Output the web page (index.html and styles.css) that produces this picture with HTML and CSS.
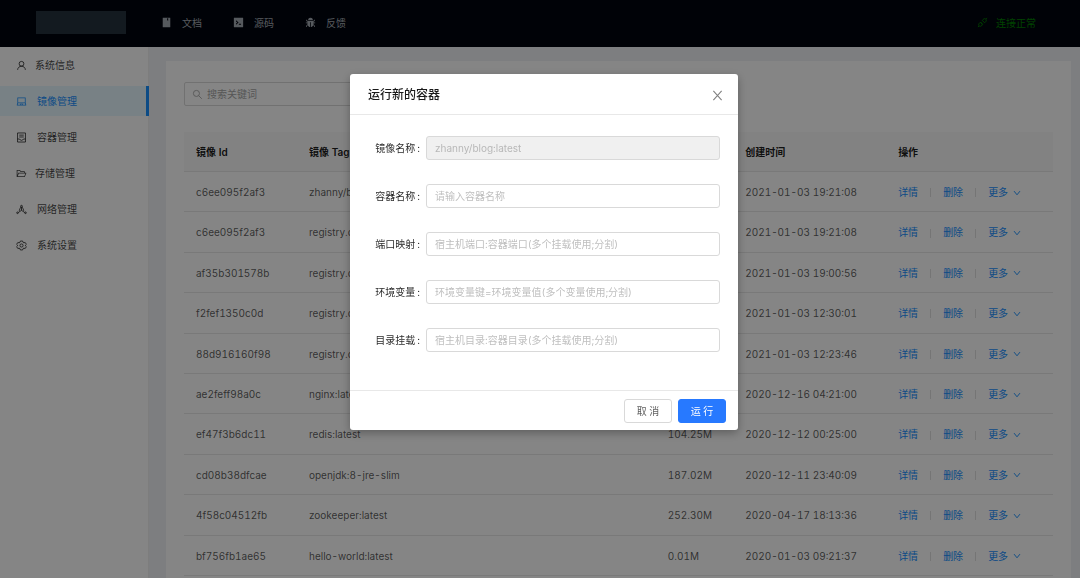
FILE: index.html
```html
<!DOCTYPE html>
<html lang="zh-CN">
<head>
<meta charset="utf-8">
<meta name="viewport" content="width=device-width, initial-scale=1">
<title>镜像管理</title>
<link rel="stylesheet" href="styles.css">
</head>
<body>
<svg class="sprite" aria-hidden="true">
  <symbol id="i-book" viewBox="0 0 1024 1024"><path d="M832 64H192c-17.700 0-32 14.300-32 32v832c0 17.700 14.300 32 32 32h640c17.700 0 32-14.300 32-32V96c0-17.700-14.300-32-32-32zM668 345.900L621.500 312 572 347.400V124h96v221.900z"/></symbol>
  <symbol id="i-code" viewBox="0 0 1024 1024"><path fill-rule="evenodd" d="M912 80H112c-17.700 0-32 14.300-32 32v800c0 17.700 14.300 32 32 32h800c17.700 0 32-14.300 32-32V112c0-17.700-14.300-32-32-32zM281 313l240 199-240 199v-104l117-95-117-95zM544 635h204v76H544z"/></symbol>
  <symbol id="i-bug" viewBox="0 0 1024 1024"><path d="M304 280h416c4 0 8-4 8-8 0-40-9-77-24-108-40-62-109-100-192-100S360 102 320 164c-15 31-24 68-24 108 0 4 4 8 8 8zM940 512H792V412c77 0 140-63 140-140 0-4-4-8-8-8h-56c-4 0-8 4-8 8 0 37-30 68-68 68H232c-37 0-68-30-68-68 0-4-4-8-8-8h-56c-4 0-8 4-8 8 0 77 63 140 140 140v100H84c-4 0-8 4-8 8v56c0 4 4 8 8 8h148v96c0 7 0 13 1 19-83 38-141 122-141 220 0 4 4 8 8 8h56c4 0 8-4 8-8 0-65 39-121 95-146 43 105 130 157 217 169V484h72v458c87-12 174-64 217-169 56 25 95 81 95 146 0 4 4 8 8 8h56c4 0 8-4 8-8 0-98-58-182-141-220 1-6 1-12 1-19v-96h148c4 0 8-4 8-8v-56c0-4-4-8-8-8z"/></symbol>
  <symbol id="i-api" viewBox="0 0 1024 1024"><path class="line" d="M480 322l92-92c70-90 190-100 250-30s56 160-14 240l-94 94zM314 488l-92 92c-80 80-90 180-30 240s150 60 240-14l94-94zM850 172l90-90M84 940l100-100M414 500l-70 70M520 610l-70 70"/></symbol>
  <symbol id="i-user" viewBox="0 0 1024 1024"><path class="line" d="M512 130a222 222 0 1 1 0 444a222 222 0 1 1 0-444zM150 920c8-200 170-346 362-346s354 146 362 346"/></symbol>
  <symbol id="i-laptop" viewBox="0 0 1024 1024"><path d="M956.900 845.100L896.400 632V168c0-17.700-14.300-32-32-32h-704c-17.700 0-32 14.300-32 32v464L67.900 845.100C60.400 866 75.800 888 98 888h828.800c22.200 0 37.600-22 30.100-42.900zM200.400 208h624v395h-624V208zm228.300 608l8.100-37h150.300l8.100 37H428.700zm224 0l-19.100-86.700c-.8-3.700-4.100-6.300-7.800-6.300H398.200c-3.800 0-7 2.600-7.800 6.300L371.300 816H151l42.300-149h638.200l42.300 149H652.700z"/></symbol>
  <symbol id="i-container" viewBox="0 0 1024 1024"><path class="line" d="M144 90h736v844H144zM300 292h424M300 464h424M144 654h184c30 74 102 124 184 124s154-50 184-124h184"/></symbol>
  <symbol id="i-folder" viewBox="0 0 1024 1024"><path d="M928 444H820V330.400c0-17.700-14.300-32-32-32H473L355.700 186.200a8.150 8.150 0 0 0-5.500-2.200H96c-17.700 0-32 14.300-32 32v592c0 17.700 14.300 32 32 32h698c13 0 24.800-7.900 29.700-20l134-332c1.500-3.800 2.300-7.900 2.300-12 0-17.700-14.300-32-32-32zM136 256h188.500l119.600 114.400H748V444H238c-13 0-24.800 7.900-29.700 20L136 643.200V256zm635.300 512H159l103.300-256h612.400L771.300 768z"/></symbol>
  <symbol id="i-network" viewBox="0 0 1024 1024"><path class="line" d="M512 124a84 84 0 1 1 0 168a84 84 0 1 1 0-168zM140 742a76 76 0 1 1 0 152a76 76 0 1 1 0-152zM884 742a76 76 0 1 1 0 152a76 76 0 1 1 0-152zM512 292v300M512 592L212 790M512 592l300 198M446 290C380 400 330 500 300 640M578 290c66 110 116 210 146 350"/></symbol>
  <symbol id="i-setting" viewBox="0 0 1024 1024"><path class="line" d="M405 95h214l32 120 84 48 120-34 107 178-88 86v38l88 86-107 178-120-34-84 48-32 120H405l-32-120-84-48-120 34L62 617l88-86v-38l-88-86 107-178 120 34 84-48zM512 366a146 146 0 1 1 0 292a146 146 0 1 1 0-292z"/></symbol>
  <symbol id="i-search" viewBox="0 0 1024 1024"><path class="line" d="M412 130a282 282 0 1 1 0 564a282 282 0 1 1 0-564zM610 610l300 300"/></symbol>
  <symbol id="i-close" viewBox="0 0 1024 1024"><path class="line" d="M186 146l652 732M838 146L186 878"/></symbol>
  <symbol id="i-down" viewBox="0 0 1024 1024"><path class="line thick" d="M132 270l380 470 380-470"/></symbol>
</svg>

<div class="app">
  <header class="topbar">
    <div class="logo"></div>
    <nav class="topnav">
      <a href="#"><svg class="icon"><use href="#i-book"/></svg>文档</a>
      <a href="#"><svg class="icon"><use href="#i-code"/></svg>源码</a>
      <a href="#"><svg class="icon"><use href="#i-bug"/></svg>反馈</a>
    </nav>
    <div class="status"><svg class="icon"><use href="#i-api"/></svg>连接正常</div>
  </header>

  <div class="workspace">
    <nav class="sidebar">
      <a href="#"><svg class="icon"><use href="#i-user"/></svg>系统信息</a>
      <a href="#" class="wide active"><svg class="icon"><use href="#i-laptop"/></svg>镜像管理</a>
      <a href="#" class="wide"><svg class="icon"><use href="#i-container"/></svg>容器管理</a>
      <a href="#"><svg class="icon"><use href="#i-folder"/></svg>存储管理</a>
      <a href="#" class="wide"><svg class="icon"><use href="#i-network"/></svg>网络管理</a>
      <a href="#" class="wide"><svg class="icon"><use href="#i-setting"/></svg>系统设置</a>
    </nav>

    <main class="content">
      <section class="card">
        <label class="search">
          <svg class="icon"><use href="#i-search"/></svg>
          <input type="text" placeholder="搜索关键词" aria-label="搜索关键词">
        </label>
        <table class="images">
          <colgroup><col class="c-id"><col class="c-tag"><col class="c-size"><col class="c-time"><col class="c-ops"></colgroup>
          <thead><tr><th>镜像 Id</th><th>镜像 Tag</th><th>大小</th><th>创建时间</th><th>操作</th></tr></thead>
          <tbody id="rows"></tbody>
        </table>
      </section>
    </main>
  </div>
</div>

<div class="mask">
  <form class="modal" role="dialog" aria-modal="true" aria-labelledby="dialog-title">
    <header class="modal-head">
      <h2 id="dialog-title">运行新的容器</h2>
      <button type="button" class="close" aria-label="关闭"><svg class="icon"><use href="#i-close"/></svg></button>
    </header>
    <div class="modal-body">
      <label for="f-image">镜像名称</label><input id="f-image" type="text" value="zhanny/blog:latest" disabled>
      <label for="f-name">容器名称</label><input id="f-name" type="text" placeholder="请输入容器名称">
      <label for="f-port">端口映射</label><input id="f-port" type="text" placeholder="宿主机端口:容器端口(多个挂载使用;分割)">
      <label for="f-env">环境变量</label><input id="f-env" type="text" placeholder="环境变量键=环境变量值(多个变量使用;分割)">
      <label for="f-dir">目录挂载</label><input id="f-dir" type="text" placeholder="宿主机目录:容器目录(多个挂载使用;分割)">
    </div>
    <footer class="modal-foot">
      <button type="button" class="btn">取 消</button>
      <button type="button" class="btn primary">运 行</button>
    </footer>
  </form>
</div>
<script src="app.js"></script>
</body>
</html>
```
FILE: styles.css
```css
* { box-sizing: border-box; }

body {
  margin: 0;
  font: 10px/16px Inter, "Noto Sans CJK SC", sans-serif;
  font-variant-numeric: tabular-nums;
  color: rgba(0, 0, 0, .65);
  overflow: hidden;
}

a { color: #1890ff; text-decoration: none; }
input, button { font: inherit; }
.sprite { display: none; }
.icon { width: 11px; height: 11px; flex: none; fill: currentColor; }
.line { fill: none; stroke: currentColor; stroke-width: 84; }
.thick { stroke-width: 120; }

.app { display: flex; flex-direction: column; height: 100vh; }

.topbar {
  display: flex;
  align-items: center;
  flex: none;
  height: 47px;
  padding: 0 44px 2px 36px;
  background: #00040f;
}
.logo { width: 90px; height: 23px; background: #25333f; }
.topnav { display: flex; gap: 31px; margin-left: 35px; }
.topnav a, .status { display: flex; align-items: center; gap: 10px; }
.topnav a { color: #a6adb4; }
.status { margin-left: auto; gap: 8px; color: #008000; }

.workspace { display: flex; flex: 1; min-height: 0; }

.sidebar {
  display: flex;
  flex-direction: column;
  gap: 6px;
  flex: none;
  width: 149px;
  padding-top: 3px;
  background: #fff;
  border-right: 1px solid #f0f0f0;
}
.sidebar a {
  display: flex;
  align-items: center;
  gap: 8px;
  height: 30px;
  padding-left: 16px;
  color: rgba(0, 0, 0, .75);
}
.sidebar .wide { gap: 10px; }
.sidebar .active {
  margin-right: -1px;
  color: #1890ff;
  background: #e6f7ff;
  border-right: 3px solid #1890ff;
}

.content { flex: 1; min-width: 0; padding: 14px 9px 0 17px; background: #f0f2f5; }
.card { min-height: 100%; padding: 21px 18px; background: #fff; }

.search {
  display: flex;
  align-items: center;
  gap: 4px;
  width: 224px;
  height: 24px;
  padding: 0 7px;
  border: 1px solid #d9d9d9;
  border-radius: 2px;
  color: #a6a6a6;
}
.search input { width: 100%; padding: 0; border: 0; outline: 0; background: none; }
input::placeholder { color: #bfbfbf; }
.search input::placeholder { color: #a6a6a6; }

.images {
  width: 100%;
  margin-top: 26px;
  table-layout: fixed;
  border-collapse: separate;
  border-spacing: 0;
}
.c-id { width: 13%; }
.c-tag { width: 41.3%; }
.c-size { width: 8.9%; }
.c-time { width: 17.6%; }
.images th, .images td {
  padding: 13px 12px 11px;
  line-height: 1.54;
  text-align: left;
  white-space: nowrap;
  border-bottom: 1px solid #e8e8e8;
}
.images th { line-height: 15px; font-weight: 600; color: rgba(0, 0, 0, .9); background: #fafafa; }
.ops { display: flex; align-items: center; }
.ops a { display: flex; align-items: center; gap: 5px; }
.ops i { width: 1px; height: 9px; margin: 0 12px; background: #e0e0e0; }
.ops .icon { width: 8px; height: 8px; }

.mask {
  position: fixed;
  inset: 0;
  display: flex;
  align-items: flex-start;
  justify-content: center;
  padding: 74px 0 0 8px;
  background: rgba(0, 0, 0, .48);
}
.modal {
  width: 36%;
  min-width: 388px;
  background: #fff;
  border-radius: 3px;
  box-shadow: 0 3px 10px rgba(0, 0, 0, .3);
}
.modal-head {
  display: flex;
  align-items: center;
  justify-content: space-between;
  height: 41px;
  padding: 2px 14px 0 18px;
  border-bottom: 1px solid #e8e8e8;
}
.modal-head h2 { margin: 0; font-size: 12px; font-weight: 500; color: rgba(0, 0, 0, .9); }
.close { display: flex; padding: 0; border: 0; background: none; color: #808080; }
.close .icon { width: 13px; height: 13px; }
.modal-body {
  display: grid;
  grid-template-columns: 52px 1fr;
  gap: 24px 6px;
  align-items: center;
  padding: 21px 18px 38px;
}
.modal-body label { color: rgba(0, 0, 0, .85); text-align: right; white-space: nowrap; }
.modal-body label::after { content: ":"; margin-left: 2px; }
.modal-body input {
  width: 100%;
  height: 24px;
  padding: 0 8px;
  border: 1px solid #d9d9d9;
  border-radius: 3px;
  background: #fff;
  outline: 0;
}
.modal-body input:disabled { color: #b8b8b8; background: #f0f0f0; }
.modal-foot {
  display: flex;
  justify-content: flex-end;
  gap: 6px;
  padding: 8px 12px 7px;
  border-top: 1px solid #e8e8e8;
}
.btn {
  width: 48px;
  height: 24px;
  padding: 0;
  border: 1px solid #d9d9d9;
  border-radius: 3px;
  background: #fff;
  color: rgba(0, 0, 0, .65);
}
.btn.primary { border-color: #2779ff; background: #2779ff; color: #fff; }
```
FILE: app.js
```js
const images = [
  ["c6ee095f2af3", "zhanny/blog:latest", "", "2021-01-03 19:21:08"],
  ["c6ee095f2af3", "registry.cn", "", "2021-01-03 19:21:08"],
  ["af35b301578b", "registry.cn", "", "2021-01-03 19:00:56"],
  ["f2fef1350c0d", "registry.cn", "", "2021-01-03 12:30:01"],
  ["88d916160f98", "registry.cn", "", "2021-01-03 12:23:46"],
  ["ae2feff98a0c", "nginx:latest", "", "2020-12-16 04:21:00"],
  ["ef47f3b6dc11", "redis:latest", "104.25M", "2020-12-12 00:25:00"],
  ["cd08b38dfcae", "openjdk:8-jre-slim", "187.02M", "2020-12-11 23:40:09"],
  ["4f58c04512fb", "zookeeper:latest", "252.30M", "2020-04-17 18:13:36"],
  ["bf756fb1ae65", "hello-world:latest", "0.01M", "2020-01-03 09:21:37"]
];
const ops = '<td><div class="ops"><a href="#">详情</a><i></i><a href="#">删除</a><i></i>' +
  '<a href="#">更多<svg class="icon"><use href="#i-down"/></svg></a></div></td>';
document.getElementById("rows").innerHTML = images
  .map(row => "<tr>" + row.map(cell => `<td>${cell}</td>`).join("") + ops + "</tr>")
  .join("");
```
